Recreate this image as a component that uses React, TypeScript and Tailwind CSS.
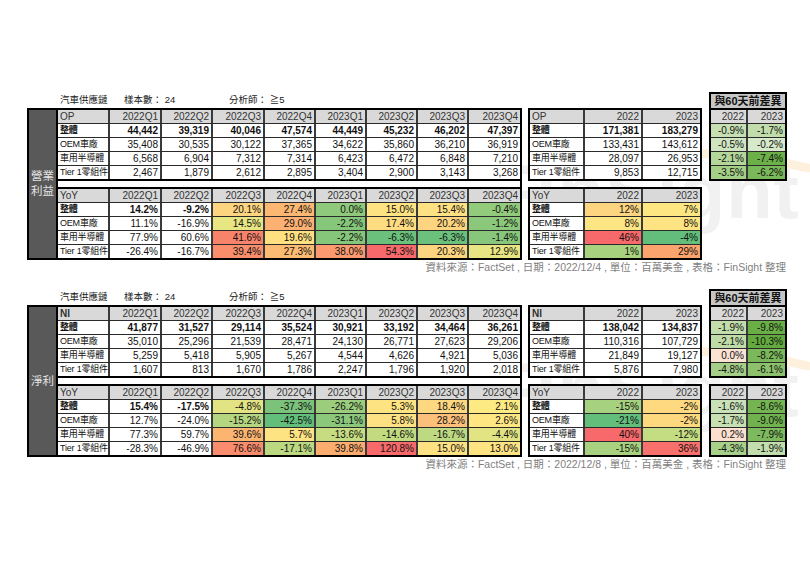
import React from "react"

type Cell = [string, string?]

const quarters = ["2022Q1", "2022Q2", "2022Q3", "2022Q4", "2023Q1", "2023Q2", "2023Q3", "2023Q4"]
const labels = ["整體", "OEM車廠", "車用半導體", "Tier 1零組件"]

const leftW = ["w-[52px]", "w-[52px]", "w-[51px]", "w-[52px]", "w-[51px]", "w-[51px]", "w-[51px]", "w-[51px]", "w-[51px]"]
const midW = ["w-[55px]", "w-[58px]", "w-[57px]"]
const diffW = ["w-[37px]", "w-[37px]"]

const sections = [
  {
    side: ["營業", "利益"],
    head: "OP",
    date: "2022/12/4",
    main: [
      ["44,442", "39,319", "40,046", "47,574", "44,449", "45,232", "46,202", "47,397"],
      ["35,408", "30,535", "30,122", "37,365", "34,622", "35,860", "36,210", "36,919"],
      ["6,568", "6,904", "7,312", "7,314", "6,423", "6,472", "6,848", "7,210"],
      ["2,467", "1,879", "2,612", "2,895", "3,404", "2,900", "3,143", "3,268"],
    ].map((r) => r.map((v) => [v] as Cell)),
    yoy: [
      [["14.2%"], ["-9.2%"], ["20.1%", "bg-[#fdd580]"], ["27.4%", "bg-[#fcb872]"], ["0.0%", "bg-[#8fca7c]"], ["15.0%", "bg-[#fee382]"], ["15.4%", "bg-[#fee182]"], ["-0.4%", "bg-[#93cb7c]"]],
      [["11.1%"], ["-16.9%"], ["14.5%", "bg-[#e8e583]"], ["29.0%", "bg-[#fcb071]"], ["-2.2%", "bg-[#85c67b]"], ["17.4%", "bg-[#fedc81]"], ["20.2%", "bg-[#fdd580]"], ["-1.2%", "bg-[#8cc87b]"]],
      [["77.9%"], ["60.6%"], ["41.6%", "bg-[#f8836b]"], ["19.6%", "bg-[#fee081]"], ["-2.2%", "bg-[#85c67b]"], ["-6.3%", "bg-[#6bc17b]"], ["-6.3%", "bg-[#6bc17b]"], ["-1.4%", "bg-[#88c77b]"]],
      [["-26.4%"], ["-16.7%"], ["39.4%", "bg-[#f98d6c]"], ["27.3%", "bg-[#fcbb73]"], ["38.0%", "bg-[#fa9a6e]"], ["54.3%", "bg-[#f8696b]"], ["20.3%", "bg-[#fdd580]"], ["12.9%", "bg-[#e8e583]"]],
    ] as Cell[][],
    mid: [
      [["171,381"], ["183,279"]],
      [["133,431"], ["143,612"]],
      [["28,097"], ["26,953"]],
      [["9,853"], ["12,715"]],
    ] as Cell[][],
    midYoy: [
      [["12%", "bg-[#fdd580]"], ["7%", "bg-[#fee683]"]],
      [["8%", "bg-[#fee583]"], ["8%", "bg-[#fee382]"]],
      [["46%", "bg-[#f8696b]"], ["-4%", "bg-[#63be7b]"]],
      [["1%", "bg-[#a9d27f]"], ["29%", "bg-[#fba46e]"]],
    ] as Cell[][],
    diff: [
      [["-0.9%", "bg-[#c6e0b4]"], ["-1.7%", "bg-[#c1ddac]"]],
      [["-0.5%", "bg-[#cfe5c2]"], ["-0.2%", "bg-[#d6e9ca]"]],
      [["-2.1%", "bg-[#b3d69b]"], ["-7.4%", "bg-[#6bb048]"]],
      [["-3.5%", "bg-[#a4cf87]"], ["-6.2%", "bg-[#7ab95a]"]],
    ] as Cell[][],
    diffYoy: null as Cell[][] | null,
  },
  {
    side: ["淨利"],
    head: "NI",
    date: "2022/12/8",
    main: [
      ["41,877", "31,527", "29,114", "35,524", "30,921", "33,192", "34,464", "36,261"],
      ["35,010", "25,296", "21,539", "28,471", "24,130", "26,771", "27,623", "29,206"],
      ["5,259", "5,418", "5,905", "5,267", "4,544", "4,626", "4,921", "5,036"],
      ["1,607", "813", "1,670", "1,786", "2,247", "1,796", "1,920", "2,018"],
    ].map((r) => r.map((v) => [v] as Cell)),
    yoy: [
      [["15.4%"], ["-17.5%"], ["-4.8%", "bg-[#e2e383]"], ["-37.3%", "bg-[#7bc27a]"], ["-26.2%", "bg-[#9bcd7d]"], ["5.3%", "bg-[#fee382]"], ["18.4%", "bg-[#fdd880]"], ["2.1%", "bg-[#feea83]"]],
      [["12.7%"], ["-24.0%"], ["-15.2%", "bg-[#b5d680]"], ["-42.5%", "bg-[#63be7b]"], ["-31.1%", "bg-[#8bc87b]"], ["5.8%", "bg-[#fee182]"], ["28.2%", "bg-[#fcc07a]"], ["2.6%", "bg-[#fee783]"]],
      [["77.3%"], ["59.7%"], ["39.6%", "bg-[#fbb571]"], ["5.7%", "bg-[#fee382]"], ["-13.6%", "bg-[#c6dc81]"], ["-14.6%", "bg-[#c2db81]"], ["-16.7%", "bg-[#bdd981]"], ["-4.4%", "bg-[#e2e383]"]],
      [["-28.3%"], ["-46.9%"], ["76.6%", "bg-[#f98c6c]"], ["-17.1%", "bg-[#bcd981]"], ["39.8%", "bg-[#fbac6f]"], ["120.8%", "bg-[#f8696b]"], ["15.0%", "bg-[#fee182]"], ["13.0%", "bg-[#fee382]"]],
    ] as Cell[][],
    mid: [
      [["138,042"], ["134,837"]],
      [["110,316"], ["107,729"]],
      [["21,849"], ["19,127"]],
      [["5,876"], ["7,980"]],
    ] as Cell[][],
    midYoy: [
      [["-15%", "bg-[#a6d27f]"], ["-2%", "bg-[#fed97f]"]],
      [["-21%", "bg-[#63be7b]"], ["-2%", "bg-[#fdd87f]"]],
      [["40%", "bg-[#f8696b]"], ["-12%", "bg-[#c5dd82]"]],
      [["-15%", "bg-[#a8d27f]"], ["36%", "bg-[#f8706b]"]],
    ] as Cell[][],
    diff: [
      [["-1.9%", "bg-[#c2ddab]"], ["-9.8%", "bg-[#6aaf46]"]],
      [["-2.1%", "bg-[#bfdba8]"], ["-10.3%", "bg-[#63ab3e]"]],
      [["0.0%", "bg-[#fbe3d4]"], ["-8.2%", "bg-[#7ab85a]"]],
      [["-4.8%", "bg-[#a5cf89]"], ["-6.1%", "bg-[#8cc26c]"]],
    ] as Cell[][],
    diffYoy: [
      [["-1.6%", "bg-[#c8e1b8]"], ["-8.6%", "bg-[#74b552]"]],
      [["-1.7%", "bg-[#c6e0b4]"], ["-9.0%", "bg-[#70b34e]"]],
      [["0.2%", "bg-[#fbe0d0]"], ["-7.9%", "bg-[#7db95d]"]],
      [["-4.3%", "bg-[#a7d08b]"], ["-1.9%", "bg-[#c3deae]"]],
    ] as Cell[][],
  },
]

// one block: grey header row + 4 data rows
function Rows({ widths, head, rows, withLabels = true, boldTop = true }: {
  widths: string[]
  head: string[]
  rows: Cell[][]
  withLabels?: boolean
  boldTop?: boolean
}) {
  const body = rows.map((r, i) => (withLabels ? [[labels[i]] as Cell, ...r] : r))
  const n = widths.length
  return (
    <div className="flex flex-col">
      <div className="flex h-[14px] border-b border-[#2a2a2a] bg-[#d9d9d9] text-[#333]">
        {head.map((h, i) => (
          <div
            key={i}
            className={`${widths[i]} h-full flex items-center whitespace-nowrap ${i < n - 1 ? "border-r-2 border-[#3a3a3a]" : ""} ${
              i === 0 && withLabels ? "justify-start pl-[2px]" : "justify-end pr-[2px]"
            } ${h === "NI" ? "font-bold" : ""}`}
          >
            {h}
          </div>
        ))}
      </div>
      {body.map((r, ri) => (
        <div key={ri} className={`flex ${ri < body.length - 1 ? "h-[14px] border-b border-[#2a2a2a]" : "h-[13px]"}`}>
          {r.map((c, ci) => {
            const isLabel = ci === 0 && withLabels
            return (
              <div
                key={ci}
                className={`${widths[ci]} h-full flex items-center whitespace-nowrap overflow-hidden ${c[1] ?? "bg-white"} ${
                  ci < n - 1 ? "border-r-2 border-[#3a3a3a]" : ""
                } ${isLabel ? "justify-start pl-[2px] text-[9px] tracking-[-0.2px]" : "justify-end pr-[2px]"} ${
                  ri === 0 && boldTop && !c[1] ? "font-bold" : ""
                } ${ri === 0 && isLabel ? "font-bold" : ""}`}
              >
                {c[0]}
              </div>
            )
          })}
        </div>
      ))}
    </div>
  )
}

// faint FinSight mark behind the tables
function Watermark({ top }: { top: string }) {
  return (
    <div className={`absolute left-[488px] ${top} z-0 select-none`}>
      <svg width="300" height="40" className="absolute left-[40px] top-[-12px]" viewBox="0 0 300 40">
        <path d="M40 34 Q 150 -6 280 26" stroke="#fdf0dc" strokeWidth="9" fill="none" strokeLinecap="round" />
      </svg>
      <div className="text-[76px] leading-none font-bold text-[#f1f1f1] tracking-[1px]">FinSight</div>
    </div>
  )
}

function Section({ s }: { s: (typeof sections)[number] }) {
  return (
    <div className="flex items-start">
      <div className="flex flex-col">
        <div className="h-[16px] flex items-center text-[9.5px] text-[#1a1a1a] pt-[1px]">
          <span className="ml-[33px] w-[64px]">汽車供應鏈</span>
          <span className="w-[105px]">樣本數： 24</span>
          <span>分析師： ≧5</span>
        </div>
        <div className="flex border-2 border-black w-[495px] bg-white">
          <div className="w-[27px] bg-[#595959] flex flex-col items-center justify-center text-[#e4e4e4] text-[11.5px] leading-[15px]">
            {s.side.map((t) => (
              <span key={t}>{t}</span>
            ))}
          </div>
          <div className="flex flex-col border-l-2 border-black">
            <Rows widths={leftW} head={[s.head, ...quarters]} rows={s.main} />
            <div className="h-[10px] border-t-2 border-b-2 border-black bg-white" />
            <Rows widths={leftW} head={["YoY", ...quarters]} rows={s.yoy} />
          </div>
        </div>
      </div>

      <div className="flex flex-col ml-[6px]">
        <div className="h-[16px]" />
        <div className="border-2 border-black w-[174px] bg-white">
          <Rows widths={midW} head={[s.head, "2022", "2023"]} rows={s.mid} />
        </div>
        <div className="h-[6px]" />
        <div className="border-2 border-black w-[174px] bg-white">
          <Rows widths={midW} head={["YoY", "2022", "2023"]} rows={s.midYoy} boldTop={false} />
        </div>
      </div>

      <div className="flex flex-col ml-[7px]">
        <div className="h-[16px] w-[78px] border-2 border-b-0 border-black bg-[#c6c6c6] flex items-center justify-center text-[11px] font-bold text-[#111] whitespace-nowrap">
          與60天前差異
        </div>
        <div className="border-2 border-black w-[78px] bg-white">
          <Rows widths={diffW} head={["2022", "2023"]} rows={s.diff} withLabels={false} boldTop={false} />
        </div>
        {s.diffYoy && (
          <>
            <div className="h-[6px]" />
            <div className="border-2 border-black w-[78px] bg-white">
              <Rows widths={diffW} head={["2022", "2023"]} rows={s.diffYoy} withLabels={false} boldTop={false} />
            </div>
          </>
        )}
      </div>
    </div>
  )
}

function Source({ date }: { date: string }) {
  return (
    <div className="w-[759px] h-[16px] flex items-center justify-end text-[10.5px] text-[#7f7f7f] whitespace-nowrap">
      資料來源：FactSet , 日期：{date} , 單位：百萬美金 , 表格：FinSight 整理
    </div>
  )
}

export default function App() {
  return (
    <div className="w-[810px] h-[580px] bg-white relative overflow-hidden font-['Liberation_Sans','Noto_Sans_CJK_TC',sans-serif] text-[10px] text-[#111]">
      <Watermark top="top-[154px]" />
      <Watermark top="top-[352px]" />
      <div className="relative z-10 pt-[92px] pl-[27px]">
        <Section s={sections[0]} />
        <Source date={sections[0].date} />
        <div className="h-[13px]" />
        <Section s={sections[1]} />
        <Source date={sections[1].date} />
      </div>
    </div>
  )
}
